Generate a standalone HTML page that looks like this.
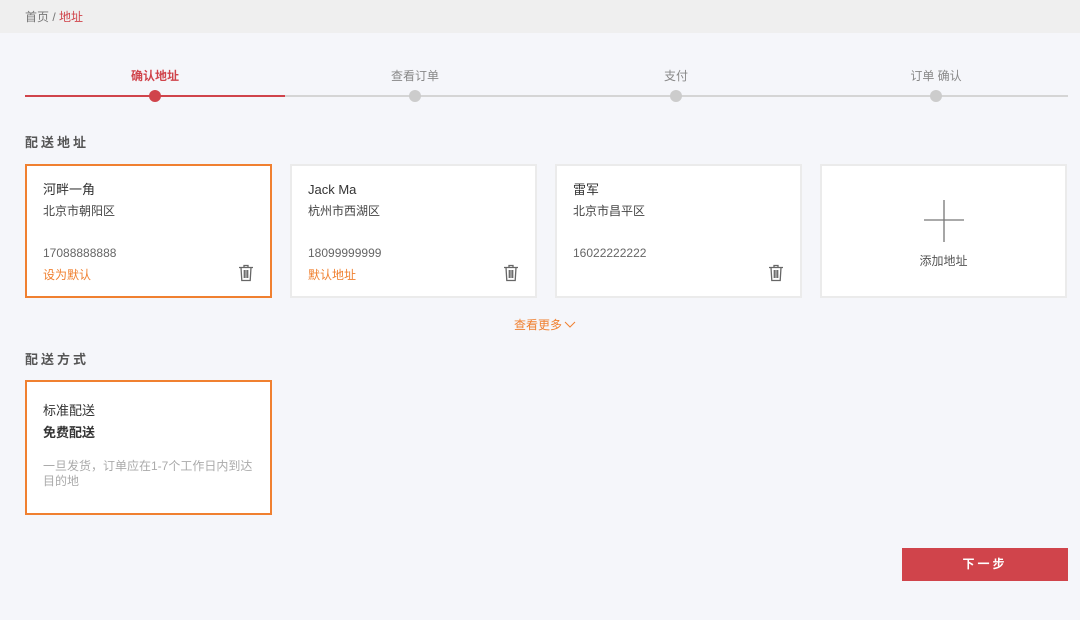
<!DOCTYPE html>
<html><head><meta charset="utf-8"><style>
*{margin:0;padding:0;box-sizing:border-box}
body{width:1080px;height:620px;background:#f5f6fa;font-family:"Liberation Sans","Noto Sans CJK SC",sans-serif;position:relative;overflow:hidden;color:#333}
.top{position:absolute;left:0;top:0;width:1080px;height:33px;background:#efefef;font-size:12px;color:#777;padding:8px 0 0 25px}
.top span{color:#d0444b}
.abs{position:absolute}
.step{position:absolute;top:67px;font-size:12px;color:#888;transform:translateX(-50%);white-space:nowrap}
.dot{position:absolute;top:90px;width:12px;height:12px;border-radius:6px;background:#ccc;margin-left:-6px}
.h{position:absolute;font-size:13px;font-weight:bold;color:#555;letter-spacing:3px}
.card{position:absolute;top:164px;width:247px;height:134px;background:#fff;border:2px solid #ebebeb;padding:15px 0 0 16px}
.card.sel{border-color:#f08030}
.nm{font-size:13px;color:#333;line-height:18px}
.ad{font-size:12px;color:#444;margin-top:5px;line-height:14px}
.ph{font-size:12px;color:#666;margin-top:28px;line-height:14px}
.df{font-size:12px;color:#f08030;margin-top:8px;line-height:14px}
.trash{position:absolute;right:16px;bottom:14px}
</style></head><body>
<div class="top">首页 / <span>地址</span></div>
<div class="abs" style="left:25px;top:95px;width:260px;height:2px;background:#d0444b"></div>
<div class="abs" style="left:285px;top:95px;width:783px;height:2px;background:#d5d5d5"></div>
<div class="step" style="left:155px;color:#d0444b;font-weight:bold">确认地址</div>
<div class="step" style="left:415px">查看订单</div>
<div class="step" style="left:676px">支付</div>
<div class="step" style="left:936px">订单 确认</div>
<div class="dot" style="left:155px;background:#d0444b"></div>
<div class="dot" style="left:415px"></div>
<div class="dot" style="left:676px"></div>
<div class="dot" style="left:936px"></div>
<div class="h" style="left:25px;top:132px">配送地址</div>
<svg width="0" height="0" style="position:absolute"><defs><g id="tr" fill="none" stroke="#666" stroke-width="1.3"><path d="M1 3.5h14M6 3.5V1.5h4v2M3 3.5l.8 13h8.4l.8-13M6.3 6v8M8 6v8M9.7 6v8"/></g></defs></svg>
<div class="card sel" style="left:25px"><div class="nm">河畔一角</div><div class="ad">北京市朝阳区</div><div class="ph">17088888888</div><div class="df">设为默认</div><svg class="trash" width="16" height="18"><use href="#tr"/></svg></div>
<div class="card" style="left:290px"><div class="nm">Jack Ma</div><div class="ad">杭州市西湖区</div><div class="ph">18099999999</div><div class="df">默认地址</div><svg class="trash" width="16" height="18"><use href="#tr"/></svg></div>
<div class="card" style="left:555px"><div class="nm">雷军</div><div class="ad">北京市昌平区</div><div class="ph">16022222222</div><svg class="trash" width="16" height="18"><use href="#tr"/></svg></div>
<div class="card" style="left:820px;padding:0"><svg class="abs" style="left:102px;top:34px" width="40" height="42"><path d="M20 0v42M0 20h40" stroke="#777" stroke-width="1.3"/></svg><div class="abs" style="left:0;width:243px;top:86px;text-align:center;font-size:12px;color:#555">添加地址</div></div>
<div class="abs" style="left:514px;top:316px;font-size:12px;color:#f08030">查看更多<svg width="12" height="8" style="margin-left:2px"><path d="M1 1l5 5 5-5" fill="none" stroke="#f08030" stroke-width="1"/></svg></div>
<div class="h" style="left:25px;top:349px">配送方式</div>
<div class="card sel" style="left:25px;top:380px;height:135px;padding:20px 0 0 16px"><div class="nm">标准配送</div><div class="nm" style="font-weight:bold;margin-top:4px">免费配送</div><div style="font-size:12px;color:#aaa;margin-top:17px;line-height:15px;width:215px">一旦发货，订单应在1-7个工作日内到达目的地</div></div>
<div class="abs" style="left:902px;top:548px;width:166px;height:33px;background:#d0444b;color:#fff;font-size:12px;font-weight:bold;text-align:center;line-height:33px;letter-spacing:3px">下一步</div>
</body></html>
